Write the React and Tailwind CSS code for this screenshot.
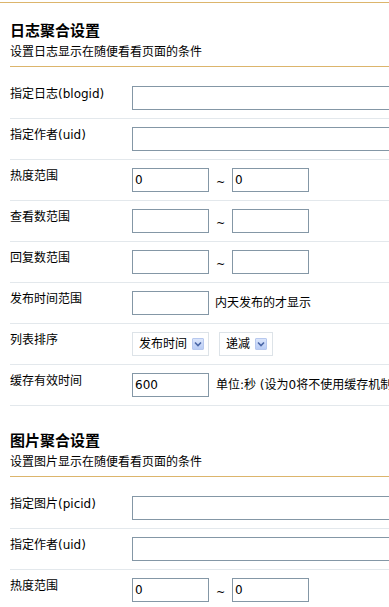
import React from "react";

function Arrow() {
  return (
    <span className="flex h-[12px] w-[12px] items-center justify-center rounded-[1px] border border-[#b7c8ee] bg-gradient-to-b from-[#dbe5fb] to-[#b9ccf5]">
      <svg width="8" height="6" viewBox="0 0 8 6">
        <path d="M1 1.5 L4 4.5 L7 1.5" fill="none" stroke="#4a66a6" strokeWidth="1.6" />
      </svg>
    </span>
  );
}

function Input({ value = "", w = "short" }) {
  return (
    <input
      readOnly
      value={value}
      className={
        w === "long"
          ? "h-[24px] w-[320px] border border-[#8497a6] bg-white px-[2px] text-[12px] text-black outline-none"
          : "h-[24px] w-[77px] border border-[#8497a6] bg-white px-[2px] text-[12px] text-black outline-none"
      }
    />
  );
}

function Tilde() {
  return <span className="mt-[6px] w-[23px] text-center text-[11px] leading-[16px]">~</span>;
}

function Row({ label, first, children }) {
  return (
    <div
      className={
        first
          ? "flex border-b border-[#e3e8ec] pt-[19px] pb-[8px]"
          : "flex border-b border-[#e3e8ec] pt-[8px] pb-[8px]"
      }
    >
      <div className="w-[122px] shrink-0 pt-[0px] text-[12px] leading-[16px]">{label}</div>
      <div className="flex items-center whitespace-nowrap text-[12px]">{children}</div>
    </div>
  );
}

function Select({ text, wide }) {
  return (
    <div
      className={
        wide
          ? "flex h-[24px] w-[77px] items-center justify-between border border-[#dde3e8] bg-white pl-[6px] pr-[4px]"
          : "flex h-[24px] w-[54px] items-center justify-between border border-[#dde3e8] bg-white pl-[6px] pr-[5px]"
      }
    >
      <span className="text-[12px] leading-[16px]">{text}</span>
      <Arrow />
    </div>
  );
}

function Head({ title, sub, top }) {
  return (
    <div className={top ? "mt-[18px] border-b border-[#dcb56c] pb-[5px]" : "mt-[25px] border-b border-[#dcb56c] pb-[5px]"}>
      <div className="text-[15px] font-bold leading-[20px] text-black">{title}</div>
      <div className="mt-[2px] text-[12px] leading-[18px]">{sub}</div>
    </div>
  );
}

export default function App() {
  return (
    <div className="w-[389px] h-[607px] overflow-hidden bg-white text-black font-['DejaVu_Sans','Noto_Sans_CJK_SC',sans-serif]">
      <div className="h-[2px]" />
      <div className="border-t border-[#dcb56c]" />
      <div className="w-[600px] pl-[10px]">
        <Head top title="日志聚合设置" sub="设置日志显示在随便看看页面的条件" />
        <Row first label="指定日志(blogid)">
          <Input w="long" />
        </Row>
        <Row label="指定作者(uid)">
          <Input w="long" />
        </Row>
        <Row label="热度范围">
          <Input value="0" />
          <Tilde />
          <Input value="0" />
        </Row>
        <Row label="查看数范围">
          <Input />
          <Tilde />
          <Input />
        </Row>
        <Row label="回复数范围">
          <Input />
          <Tilde />
          <Input />
        </Row>
        <Row label="发布时间范围">
          <Input />
          <span className="ml-[6px]">内天发布的才显示</span>
        </Row>
        <Row label="列表排序">
          <Select wide text="发布时间" />
          <div className="w-[10px]" />
          <Select text="递减" />
        </Row>
        <Row label="缓存有效时间">
          <Input value="600" />
          <span className="ml-[7px]">单位:秒 (设为0将不使用缓存机制)</span>
        </Row>

        <Head title="图片聚合设置" sub="设置图片显示在随便看看页面的条件" />
        <Row first label="指定图片(picid)">
          <Input w="long" />
        </Row>
        <Row label="指定作者(uid)">
          <Input w="long" />
        </Row>
        <Row label="热度范围">
          <Input value="0" />
          <Tilde />
          <Input value="0" />
        </Row>
      </div>
    </div>
  );
}
